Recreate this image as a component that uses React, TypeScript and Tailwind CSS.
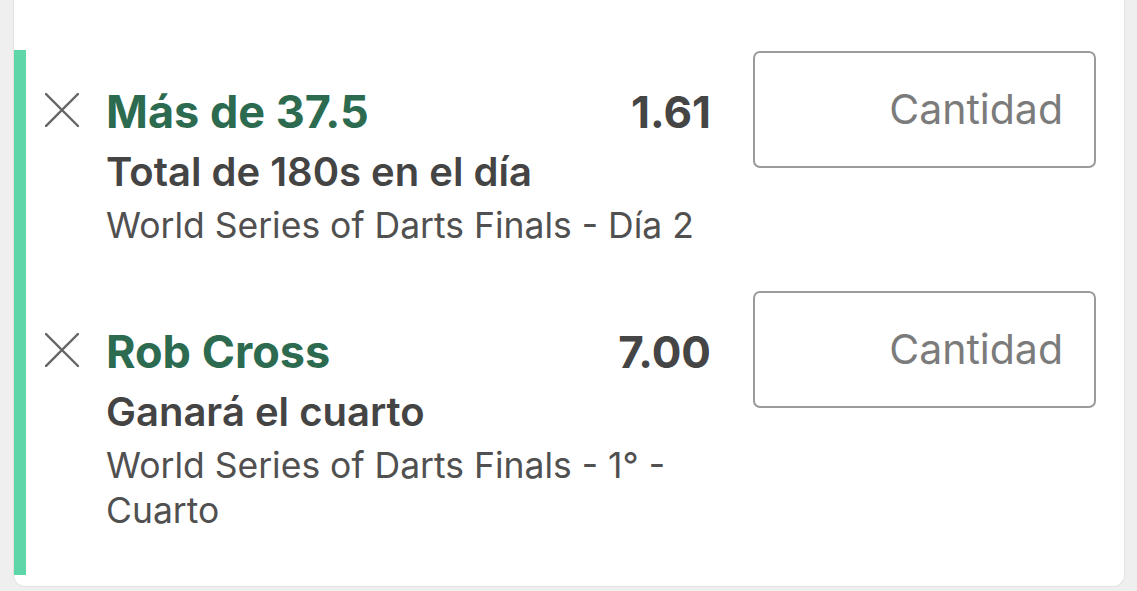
import React from 'react';

interface Selection {
  pick: string;
  odds: string;
  market: string;
  event: string;
}

const selections: Selection[] = [
  {
    pick: 'Más de 37.5',
    odds: '1.61',
    market: 'Total de 180s en el día',
    event: 'World Series of Darts Finals - Día 2',
  },
  {
    pick: 'Rob Cross',
    odds: '7.00',
    market: 'Ganará el cuarto',
    event: 'World Series of Darts Finals - 1° - Cuarto',
  },
];

const RemoveIcon: React.FC = () => (
  <svg width="34" height="34" viewBox="0 0 34 34" className="shrink-0">
    <path d="M1 1L33 33M33 1L1 33" stroke="#666666" strokeWidth="2.4" strokeLinecap="square" />
  </svg>
);

const SelectionRow: React.FC<{ item: Selection }> = ({ item }) => (
  <div className="flex items-start">
    <div className="flex w-[666px] items-start pt-[37px]">
      <div className="mt-[6px] w-[61px] shrink-0">
        <RemoveIcon />
      </div>
      <div className="flex min-w-0 flex-1 flex-col">
        <div className="flex items-start justify-between">
          <span className="text-[45px] font-bold leading-[50px] text-[#2c6b50]">{item.pick}</span>
          <span className="text-[44px] font-bold leading-[50px] text-[#454545]">{item.odds}</span>
        </div>
        <div className="mt-[12px] text-[40px] font-semibold leading-[46px] text-[#444444]">
          {item.market}
        </div>
        <div className="mt-[8px] text-[35.5px] leading-[45px] text-[#505050]">{item.event}</div>
      </div>
    </div>
    <div className="ml-[42px] mt-[1px] flex h-[117px] w-[343px] items-center justify-end rounded-[7px] border-2 border-[#9b9b9b] pr-[31px]">
      <span className="text-[41px] leading-none text-[#7b7b7b]">Cantidad</span>
    </div>
  </div>
);

export default function App() {
  return (
    <div
      className="h-[591px] w-[1137px] overflow-hidden bg-[#efefef]"
      style={{ fontFamily: 'Inter, "Noto Sans", "Liberation Sans", sans-serif' }}
    >
      <div className="ml-[13px] flex h-[587px] w-[1112px] rounded-b-[12px] border-x border-b border-[#e2e2e2] bg-white pb-[11px] pt-[50px]">
        {/* accent bar */}
        <div className="w-[12px] shrink-0 bg-[#5fd6a7]" />
        <div className="ml-[19px] flex flex-col gap-[42px]">
          {selections.map((s) => (
            <SelectionRow key={s.pick} item={s} />
          ))}
        </div>
      </div>
    </div>
  );
}
